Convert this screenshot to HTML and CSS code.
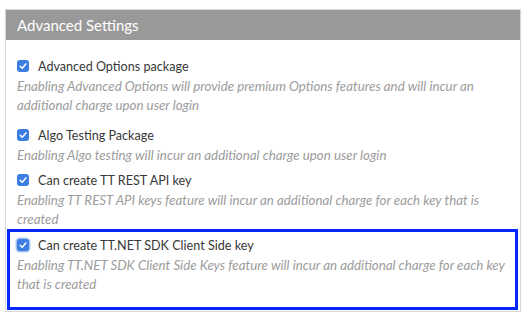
FILE: index.html
```html
<!DOCTYPE html>
<html lang="en">
<head>
    <meta charset="UTF-8">
    <meta name="viewport" content="width=device-width, initial-scale=1.0">
    <title>Advanced Settings</title>
    <link rel="stylesheet" href="styles.css">
</head>
<body>
    <div class="panel">
        <div class="panel-head">Advanced Settings</div>
        <div class="panel-body">
            <div class="item item-first">
                <label class="opt"><span class="check"><svg viewBox="0 0 12 12"><path d="M3.2 6.3 L5.2 8.2 L8.9 3.9"/></svg></span>Advanced Options package</label>
                <p class="desc">Enabling Advanced Options will provide premium Options features and will incur an additional charge upon user login</p>
            </div>
            <div class="item">
                <label class="opt"><span class="check"><svg viewBox="0 0 12 12"><path d="M3.2 6.3 L5.2 8.2 L8.9 3.9"/></svg></span>Algo Testing Package</label>
                <p class="desc">Enabling Algo testing will incur an additional charge upon user login</p>
            </div>
            <div class="item item-last">
                <label class="opt"><span class="check"><svg viewBox="0 0 12 12"><path d="M3.2 6.3 L5.2 8.2 L8.9 3.9"/></svg></span>Can create TT REST API key</label>
                <p class="desc">Enabling TT REST API keys feature will incur an additional charge for each key that is created</p>
            </div>
            <div class="item item-marked">
                <label class="opt"><span class="check focus"><svg viewBox="0 0 12 12"><path d="M3.2 6.3 L5.2 8.2 L8.9 3.9"/></svg></span>Can create TT.NET SDK Client Side key</label>
                <p class="desc">Enabling TT.NET SDK Client Side Keys feature will incur an additional charge for each key that is created</p>
            </div>
        </div>
    </div>
</body>
</html>
```

FILE: styles.css
```css
body, html{
    margin: 0;
    background: #fff;
}
body{
    padding: 9px 3px 0 5px;
    font-family: 'Lato', 'Open Sans', sans-serif;
}
.panel{
    border: 1px solid #d8d8d8;
    box-shadow: 0 1px 2px rgba(0,0,0,0.08);
}
.panel-head{
    background-color: #999999;
    color: white;
    font-size: 15px;
    height: 30px;
    line-height: 30px;
    padding-left: 11px;
}
.panel-body{
    padding: 16px 2px 1px 1px;
}
.item{
    padding: 0 10px;
    margin-bottom: 5px;
}
.item-first{
    margin-bottom: 10px;
}
.item-last{
    margin-bottom: 0;
}
.item-marked{
    border: 3px solid #0526ff;
    padding: 3px 7px 13px;
    margin-bottom: 0;
}
.opt{
    display: flex;
    align-items: center;
    height: 20px;
    font-size: 12.6px;
    color: #383838;
}
.check{
    width: 12px;
    height: 12px;
    border-radius: 3px;
    background-color: #3b7de1;
    margin-right: 9px;
    display: flex;
}
.check.focus{
    box-shadow: 0 0 0 1.5px #a9c6f3;
}
.check svg{
    width: 12px;
    height: 12px;
    fill: none;
    stroke: white;
    stroke-width: 1.5;
    stroke-linecap: round;
    stroke-linejoin: round;
}
.desc{
    margin: 0;
    font-size: 13.3px;
    font-style: italic;
    line-height: 19px;
    color: #9c9c9c;
    padding-top: 1px;
}
```
